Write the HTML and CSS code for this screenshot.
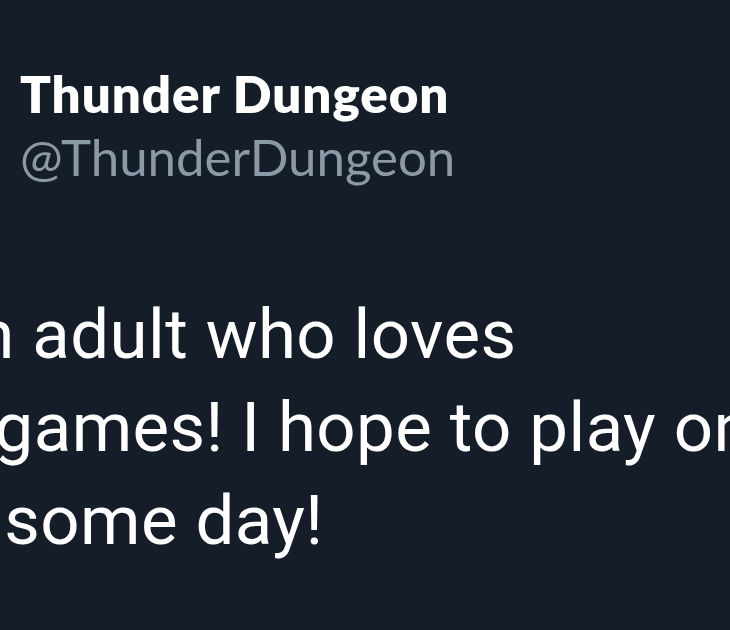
FILE: index.html
```html
<!DOCTYPE html>
<html lang="en">

<head>
    <meta charset="UTF-8">
    <title>Thunder Dungeon</title>
    <link rel="stylesheet" href="styles.css">
</head>

<body>
    <div class="tweet">
        <div class="author">
            <div class="name">Thunder Dungeon</div>
            <div class="handle">@ThunderDungeon</div>
        </div>
        <p class="text">
            <span class="line line-1">I'm an adult who loves</span>
            <span class="line">video games! I hope to play one</span>
            <span class="line line-3">again some day!</span>
        </p>
    </div>
</body>

</html>
```

FILE: styles.css
```css
body {
    margin: 0;
    padding: 0;
    background: #151d28;
    width: 730px;
    height: 630px;
    overflow: hidden;
}

.tweet {
    padding-top: 62px;
}

.author {
    padding-left: 20px;
    font-family: Lato, 'Liberation Sans', sans-serif;
    font-size: 51px;
    line-height: 63px;
}

.name {
    color: #ffffff;
    font-weight: 800;
    letter-spacing: 1px;
}

.handle {
    color: #8b98a5;
    font-weight: 400;
}

.text {
    margin: 100px 0 0 -190px;
    color: #ffffff;
    font-family: Roboto, 'Liberation Sans', sans-serif;
    font-size: 69px;
    line-height: 93px;
    letter-spacing: 0.4px;
    white-space: nowrap;
}

.line {
    display: block;
}

.line-1 {
    padding-left: 19px;
}

.line-3 {
    padding-left: 6px;
}
```
